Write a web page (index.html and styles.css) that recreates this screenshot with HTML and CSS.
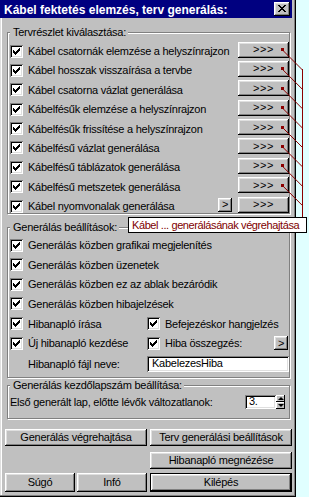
FILE: index.html
```html
<!DOCTYPE html>
<html lang="hu">
<head>
<meta charset="utf-8">
<title>Kábel fektetés elemzés, terv generálás</title>
<link rel="stylesheet" href="styles.css">
</head>
<body>
<div class="dialog">
  <div class="titlebar">
    <span class="title">Kábel fektetés elemzés, terv generálás:</span>
    <span class="close"><svg width="8" height="7" viewBox="0 0 8 7" shape-rendering="crispEdges"><path d="M0 0h2v1H0zM6 0h2v1H6zM1 1h2v1H1zM5 1h2v1H5zM2 2h4v1H2zM3 3h2v1H3zM2 4h4v1H2zM1 5h2v1H1zM5 5h2v1H5zM0 6h2v1H0zM6 6h2v1H6z"/></svg></span>
  </div>
  <div class="client">
    <fieldset class="group g-plan">
      <legend>Tervrészlet kiválasztása:</legend>
      <div class="row"><span class="cb"></span><span class="lbl">Kábel csatornák elemzése a helyszínrajzon</span><span class="btn more">&gt;&gt;&gt;</span></div>
      <div class="row"><span class="cb"></span><span class="lbl">Kábel hosszak visszaírása a tervbe</span><span class="btn more">&gt;&gt;&gt;</span></div>
      <div class="row"><span class="cb"></span><span class="lbl">Kábel csatorna vázlat generálása</span><span class="btn more">&gt;&gt;&gt;</span></div>
      <div class="row"><span class="cb"></span><span class="lbl">Kábelfésűk elemzése a helyszínrajzon</span><span class="btn more">&gt;&gt;&gt;</span></div>
      <div class="row"><span class="cb"></span><span class="lbl">Kábelfésűk frissítése a helyszínrajzon</span><span class="btn more">&gt;&gt;&gt;</span></div>
      <div class="row"><span class="cb"></span><span class="lbl">Kábelfésű vázlat generálása</span><span class="btn more">&gt;&gt;&gt;</span></div>
      <div class="row"><span class="cb"></span><span class="lbl">Kábelfésű táblázatok generálása</span><span class="btn more">&gt;&gt;&gt;</span></div>
      <div class="row"><span class="cb"></span><span class="lbl">Kábelfésű metszetek generálása</span><span class="btn more">&gt;&gt;&gt;</span></div>
      <div class="row"><span class="cb"></span><span class="lbl">Kábel nyomvonalak generálása</span><span class="btn small">&gt;</span><span class="btn more">&gt;&gt;&gt;</span></div>
    </fieldset>

    <fieldset class="group g-settings">
      <legend>Generálás beállítások:</legend>
      <div class="row"><span class="cb"></span><span class="lbl">Generálás közben grafikai megjelenítés</span></div>
      <div class="row"><span class="cb"></span><span class="lbl">Generálás közben üzenetek</span></div>
      <div class="row"><span class="cb"></span><span class="lbl">Generálás közben ez az ablak bezáródik</span></div>
      <div class="row"><span class="cb"></span><span class="lbl">Generálás közben hibajelzések</span></div>
      <div class="row two">
        <div class="cell"><span class="cb"></span><span class="lbl">Hibanapló írása</span></div>
        <div class="cell"><span class="cb"></span><span class="lbl">Befejezéskor hangjelzés</span></div>
      </div>
      <div class="row two">
        <div class="cell"><span class="cb"></span><span class="lbl">Új hibanapló kezdése</span></div>
        <div class="cell"><span class="cb"></span><span class="lbl">Hiba összegzés:</span><span class="btn small end">&gt;</span></div>
      </div>
      <div class="row two file">
        <div class="cell"><span class="lbl indent">Hibanapló fájl neve:</span></div>
        <div class="cell"><span class="input">KabelezesHiba</span></div>
      </div>
    </fieldset>

    <fieldset class="group g-start">
      <legend>Generálás kezdőlapszám beállítása:</legend>
      <div class="row"><span class="lbl">Első generált lap, előtte lévők változatlanok:</span>
        <span class="spinwrap"><span class="input num">3.</span><span class="spin"><span class="sb up"></span><span class="sb down"></span></span></span>
      </div>
    </fieldset>

    <div class="buttons">
      <span class="btn wide r1">Generálás végrehajtása</span>
      <span class="btn wide r1">Terv generálási beállítások</span>
      <span class="slot"></span>
      <span class="btn wide r2">Hibanapló megnézése</span>
      <span class="pair r3"><span class="btn half">Súgó</span><span class="btn half">Infó</span></span>
      <span class="btn wide default r3">Kilépés</span>
    </div>
  </div>
</div>

<svg class="callout" width="309" height="497" viewBox="0 0 309 497">
  <g stroke="#8c0000" stroke-width="1" fill="none">
    <path d="M283 50.5 L302.5 70 M283 69.9 L302.5 89.4 M283 89.3 L302.5 108.8 M283 108.6 L302.5 128.1 M283 128 L302.5 147.5 M283 147.4 L302.5 166.9 M283 166.8 L302.5 186.3 M283 186.1 L302.5 205.6"/>
    <path d="M302.5 69 V217"/>
  </g>
  <g fill="#8c0000" shape-rendering="crispEdges">
    <rect x="281" y="48" width="3" height="3"/>
    <rect x="281" y="67" width="3" height="3"/>
    <rect x="281" y="87" width="3" height="3"/>
    <rect x="281" y="106" width="3" height="3"/>
    <rect x="281" y="126" width="3" height="3"/>
    <rect x="281" y="145" width="3" height="3"/>
    <rect x="281" y="164" width="3" height="3"/>
    <rect x="281" y="184" width="3" height="3"/>
  </g>
</svg>
<div class="tooltip">Kábel ... generálásának végrehajtása</div>
</body>
</html>
```

FILE: styles.css
```css
* { box-sizing: border-box; }
html, body { margin: 0; padding: 0; }
body {
  width: 309px;
  height: 497px;
  overflow: hidden;
  position: relative;
  background: #e0ffff;
  font-family: "Liberation Sans", Arial, sans-serif;
  font-size: 11px;
  letter-spacing: -0.25px;
  color: #000;
}

.dialog {
  width: 296px;
  height: 497px;
  background: #c0c0c0;
  display: flex;
  flex-direction: column;
  box-shadow:
    inset -1px -1px 0 #000,
    inset -2px -2px 0 #808080,
    inset 1px 0 0 #dfdfdf,
    inset 2px 0 0 #fff;
}

.titlebar {
  height: 18px;
  margin-right: 4px;
  background: #000080;
  color: #fff;
  display: flex;
  align-items: center;
  padding: 2px 2px 0 4px;
}
.title {
  font-weight: bold;
  font-size: 12px;
  letter-spacing: 0;
  flex: 1;
  white-space: nowrap;
}
.close {
  width: 16px;
  height: 14px;
  margin-bottom: 2px;
  background: #c0c0c0;
  display: flex;
  align-items: center;
  justify-content: center;
  padding: 0 1px 1px 0;
  box-shadow:
    inset -1px -1px 0 #000,
    inset 1px 1px 0 #fff,
    inset -2px -2px 0 #808080,
    inset 2px 2px 0 #dfdfdf;
}

.client {
  flex: 1;
  display: flex;
  flex-direction: column;
  padding: 0 3px 0 5px;
}

.group {
  margin: 0 3px 0 2px;
  padding: 0 0 0 2px;
  border: 1px solid #808080;
  box-shadow: inset 1px 1px 0 #fff, 1px 1px 0 #fff;
  min-width: 0;
  display: flex;
  flex-direction: column;
}
.group legend {
  padding: 0 2px 0 3px;
  line-height: 13px;
  height: 13px;
  background: #c0c0c0;
}

.g-plan { margin-top: 8px; padding-top: 5px; row-gap: 5.375px; }
.g-settings { margin-top: 7px; padding-top: 4px; padding-bottom: 5px; row-gap: 5.67px; }
.g-start { margin-top: 1px; padding-top: 3px; padding-bottom: 9px; }

.row {
  height: 14px;
  display: flex;
  align-items: center;
  white-space: nowrap;
}
.row.two {
  display: grid;
  grid-template-columns: 137px 1fr;
  align-items: center;
}
.row.file { height: 16px; }
.cell {
  display: flex;
  align-items: center;
  height: 100%;
}

.cb {
  width: 13px;
  height: 13px;
  flex: none;
  margin-right: 5px;
  background: #fff;
  position: relative;
  box-shadow:
    inset 1px 1px 0 #808080,
    inset -1px -1px 0 #fff,
    inset 2px 2px 0 #000,
    inset -2px -2px 0 #dfdfdf;
}
.cb::after {
  content: "";
  position: absolute;
  left: 3px;
  top: 5px;
  width: 1px;
  height: 3px;
  background: #000;
  box-shadow: 1px 1px 0 #000, 2px 2px 0 #000, 3px 1px 0 #000, 4px 0 0 #000, 5px -1px 0 #000, 6px -2px 0 #000;
}

.lbl { line-height: 14px; }
.indent { padding-left: 18px; }

.btn {
  background: #c0c0c0;
  display: flex;
  align-items: center;
  justify-content: center;
  white-space: nowrap;
  box-shadow:
    inset -1px -1px 0 #000,
    inset 1px 1px 0 #fff,
    inset -2px -2px 0 #808080,
    inset 2px 2px 0 #dfdfdf;
}
.btn.more {
  width: 51px;
  height: 16px;
  margin-left: auto;
  margin-bottom: 3px;
  letter-spacing: 0.5px;
  padding-bottom: 1px;
}
.btn.small {
  width: 14px;
  height: 14px;
  margin-left: auto;
  margin-right: 6px;
  margin-bottom: 3px;
  padding-bottom: 1px;
}
.btn.small + .btn.more { margin-left: 0; }
.btn.small.end { margin-right: 1px; margin-bottom: 0; }

.input {
  background: #fff;
  height: 16px;
  flex: 1;
  display: flex;
  align-items: center;
  padding: 0 4px 1px 5px;
  box-shadow:
    inset 1px 1px 0 #808080,
    inset -1px -1px 0 #fff,
    inset 2px 2px 0 #000,
    inset -2px -2px 0 #dfdfdf;
}

.spinwrap {
  margin-left: auto;
  margin-right: 4px;
  display: flex;
  height: 14px;
}
.input.num {
  width: 31px;
  height: 14px;
  flex: none;
  padding-left: 4px;
}
.spin {
  width: 9px;
  display: flex;
  flex-direction: column;
}
.sb {
  flex: 1;
  background: #c0c0c0;
  position: relative;
  box-shadow:
    inset -1px -1px 0 #000,
    inset 1px 1px 0 #fff;
}
.sb::after {
  content: "";
  position: absolute;
  left: 1.5px;
  width: 0;
  height: 0;
  border-left: 3px solid transparent;
  border-right: 3px solid transparent;
}
.sb.up::after { top: 2px; border-bottom: 3px solid #000; }
.sb.down::after { top: 2px; border-top: 3px solid #000; }

.buttons {
  margin-top: 10px;
  display: grid;
  grid-template-columns: 142px 142px;
  column-gap: 3px;
  grid-template-rows: 17px 23px 23px;
}
.r1 { height: 17px; }
.r2 { height: 17px; align-self: end; }
.r3 { height: 19px; align-self: end; }
.pair {
  display: grid;
  grid-template-columns: 70px 70px;
  column-gap: 2px;
}
.btn.half { height: 100%; }
.btn.default {
  box-shadow:
    inset 0 0 0 1px #000,
    inset -2px -2px 0 #000,
    inset 2px 2px 0 #fff,
    inset -3px -3px 0 #808080,
    inset 3px 3px 0 #dfdfdf;
}

.callout {
  position: absolute;
  left: 0;
  top: 0;
  pointer-events: none;
}
.tooltip {
  position: absolute;
  left: 128px;
  top: 217px;
  width: 179px;
  height: 16px;
  background: #fff;
  border: 1px solid #000;
  color: #800000;
  line-height: 14px;
  padding-left: 3px;
  white-space: nowrap;
  letter-spacing: -0.4px;
  overflow: hidden;
}
```
